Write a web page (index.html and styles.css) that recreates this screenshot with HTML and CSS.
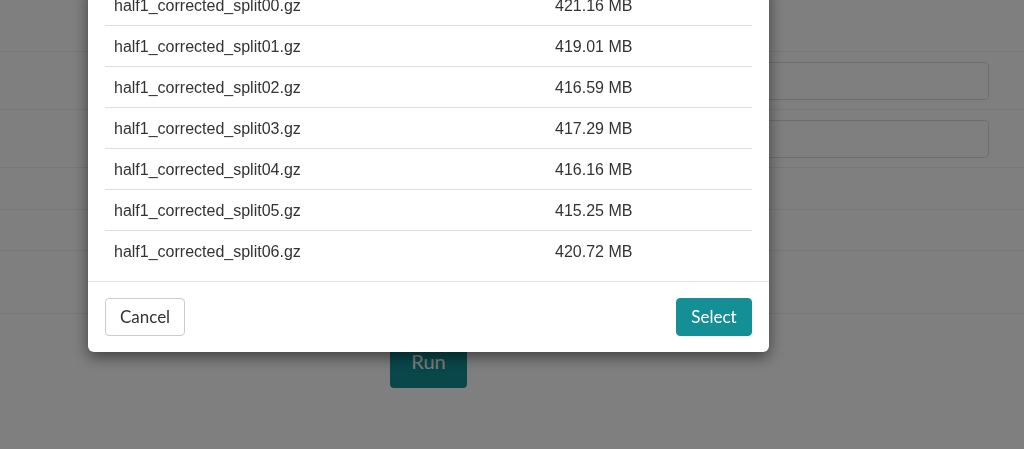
FILE: index.html
```html
<!DOCTYPE html>
<html lang="en">
<head>
    <meta charset="UTF-8">
    <meta name="viewport" content="width=device-width, initial-scale=1.0">
    <title>Select Input File</title>
    <link rel="stylesheet" href="styles.css">
</head>
<body>

<div class="page">
    <div class="form-row row-top"></div>
    <div class="form-row row-input">
        <div class="field-label"></div>
        <div class="field-box"></div>
    </div>
    <div class="form-row row-input">
        <div class="field-label"></div>
        <div class="field-box"></div>
    </div>
    <div class="form-row row-short"></div>
    <div class="form-row row-short2"></div>
    <div class="form-row row-tall"></div>

    <div class="actions">
        <button type="button" class="btn-run">Run</button>
    </div>
</div>

<div class="overlay">
    <div class="modal">
        <div class="modal-body">
            <div class="file-row"><span class="file-name">half1_corrected_split00.gz</span><span class="file-size">421.16 MB</span></div>
            <div class="file-row"><span class="file-name">half1_corrected_split01.gz</span><span class="file-size">419.01 MB</span></div>
            <div class="file-row"><span class="file-name">half1_corrected_split02.gz</span><span class="file-size">416.59 MB</span></div>
            <div class="file-row"><span class="file-name">half1_corrected_split03.gz</span><span class="file-size">417.29 MB</span></div>
            <div class="file-row"><span class="file-name">half1_corrected_split04.gz</span><span class="file-size">416.16 MB</span></div>
            <div class="file-row"><span class="file-name">half1_corrected_split05.gz</span><span class="file-size">415.25 MB</span></div>
            <div class="file-row"><span class="file-name">half1_corrected_split06.gz</span><span class="file-size">420.72 MB</span></div>
        </div>
        <div class="modal-footer">
            <button type="button" class="btn btn-cancel">Cancel</button>
            <button type="button" class="btn btn-select">Select</button>
        </div>
    </div>
</div>

</body>
</html>
```

FILE: styles.css
```css
body { margin: 0; background: #fff; font-family: "Liberation Sans", Arial, sans-serif; }

/* form underneath the dialog */
.page { width: 1024px; }
.form-row { border-bottom: 1px solid #eee; box-sizing: border-box; }
.row-top { height: 52px; }
.row-input { height: 58px; display: grid; grid-template-columns: 300px 1fr; padding: 10px 35px 0 0; }
.row-short { height: 42px; }
.row-short2 { height: 41px; }
.row-tall { height: 63px; }
.field-box { height: 38px; border: 1px solid #ddd; border-radius: 4px; box-sizing: border-box; }

.actions { padding: 28px 0 0 390px; }
.btn-run { height: 46px; width: 77px; padding: 0 0 8px; background: #148f96; color: #fff; border: 0; border-radius: 4px; font-family: Lato, sans-serif; font-size: 20px; }

/* dialog */
.overlay { position: fixed; inset: 0; background: rgba(0, 0, 0, 0.5); padding-left: 88px; }
.modal { width: 681px; margin-top: -15px; background: #fff; border-radius: 6px; box-shadow: 0 5px 15px rgba(0, 0, 0, 0.5); }
.modal-body { padding: 0 17px 10px; }
.file-row { display: grid; grid-template-columns: 441px 1fr; height: 41px; line-height: 40px; padding-top: 1px; border-bottom: 1px solid #ddd; box-sizing: border-box; font-size: 16px; color: #333; }
.file-row:last-child { border-bottom: 0; height: 40px; }
.file-name { padding-left: 9px; }
.file-size { padding-left: 9px; }

.modal-footer { display: flex; justify-content: space-between; padding: 16px 17px; border-top: 1px solid #e5e5e5; }
.btn { height: 38px; padding: 0 0 2px; font-family: Lato, sans-serif; font-size: 17px; border-radius: 4px; cursor: pointer; }
.btn-cancel { width: 80px; background: #fff; color: #333; border: 1px solid #ccc; }
.btn-select { width: 76px; background: #148f96; color: #fff; border: 1px solid #148f96; }
```
